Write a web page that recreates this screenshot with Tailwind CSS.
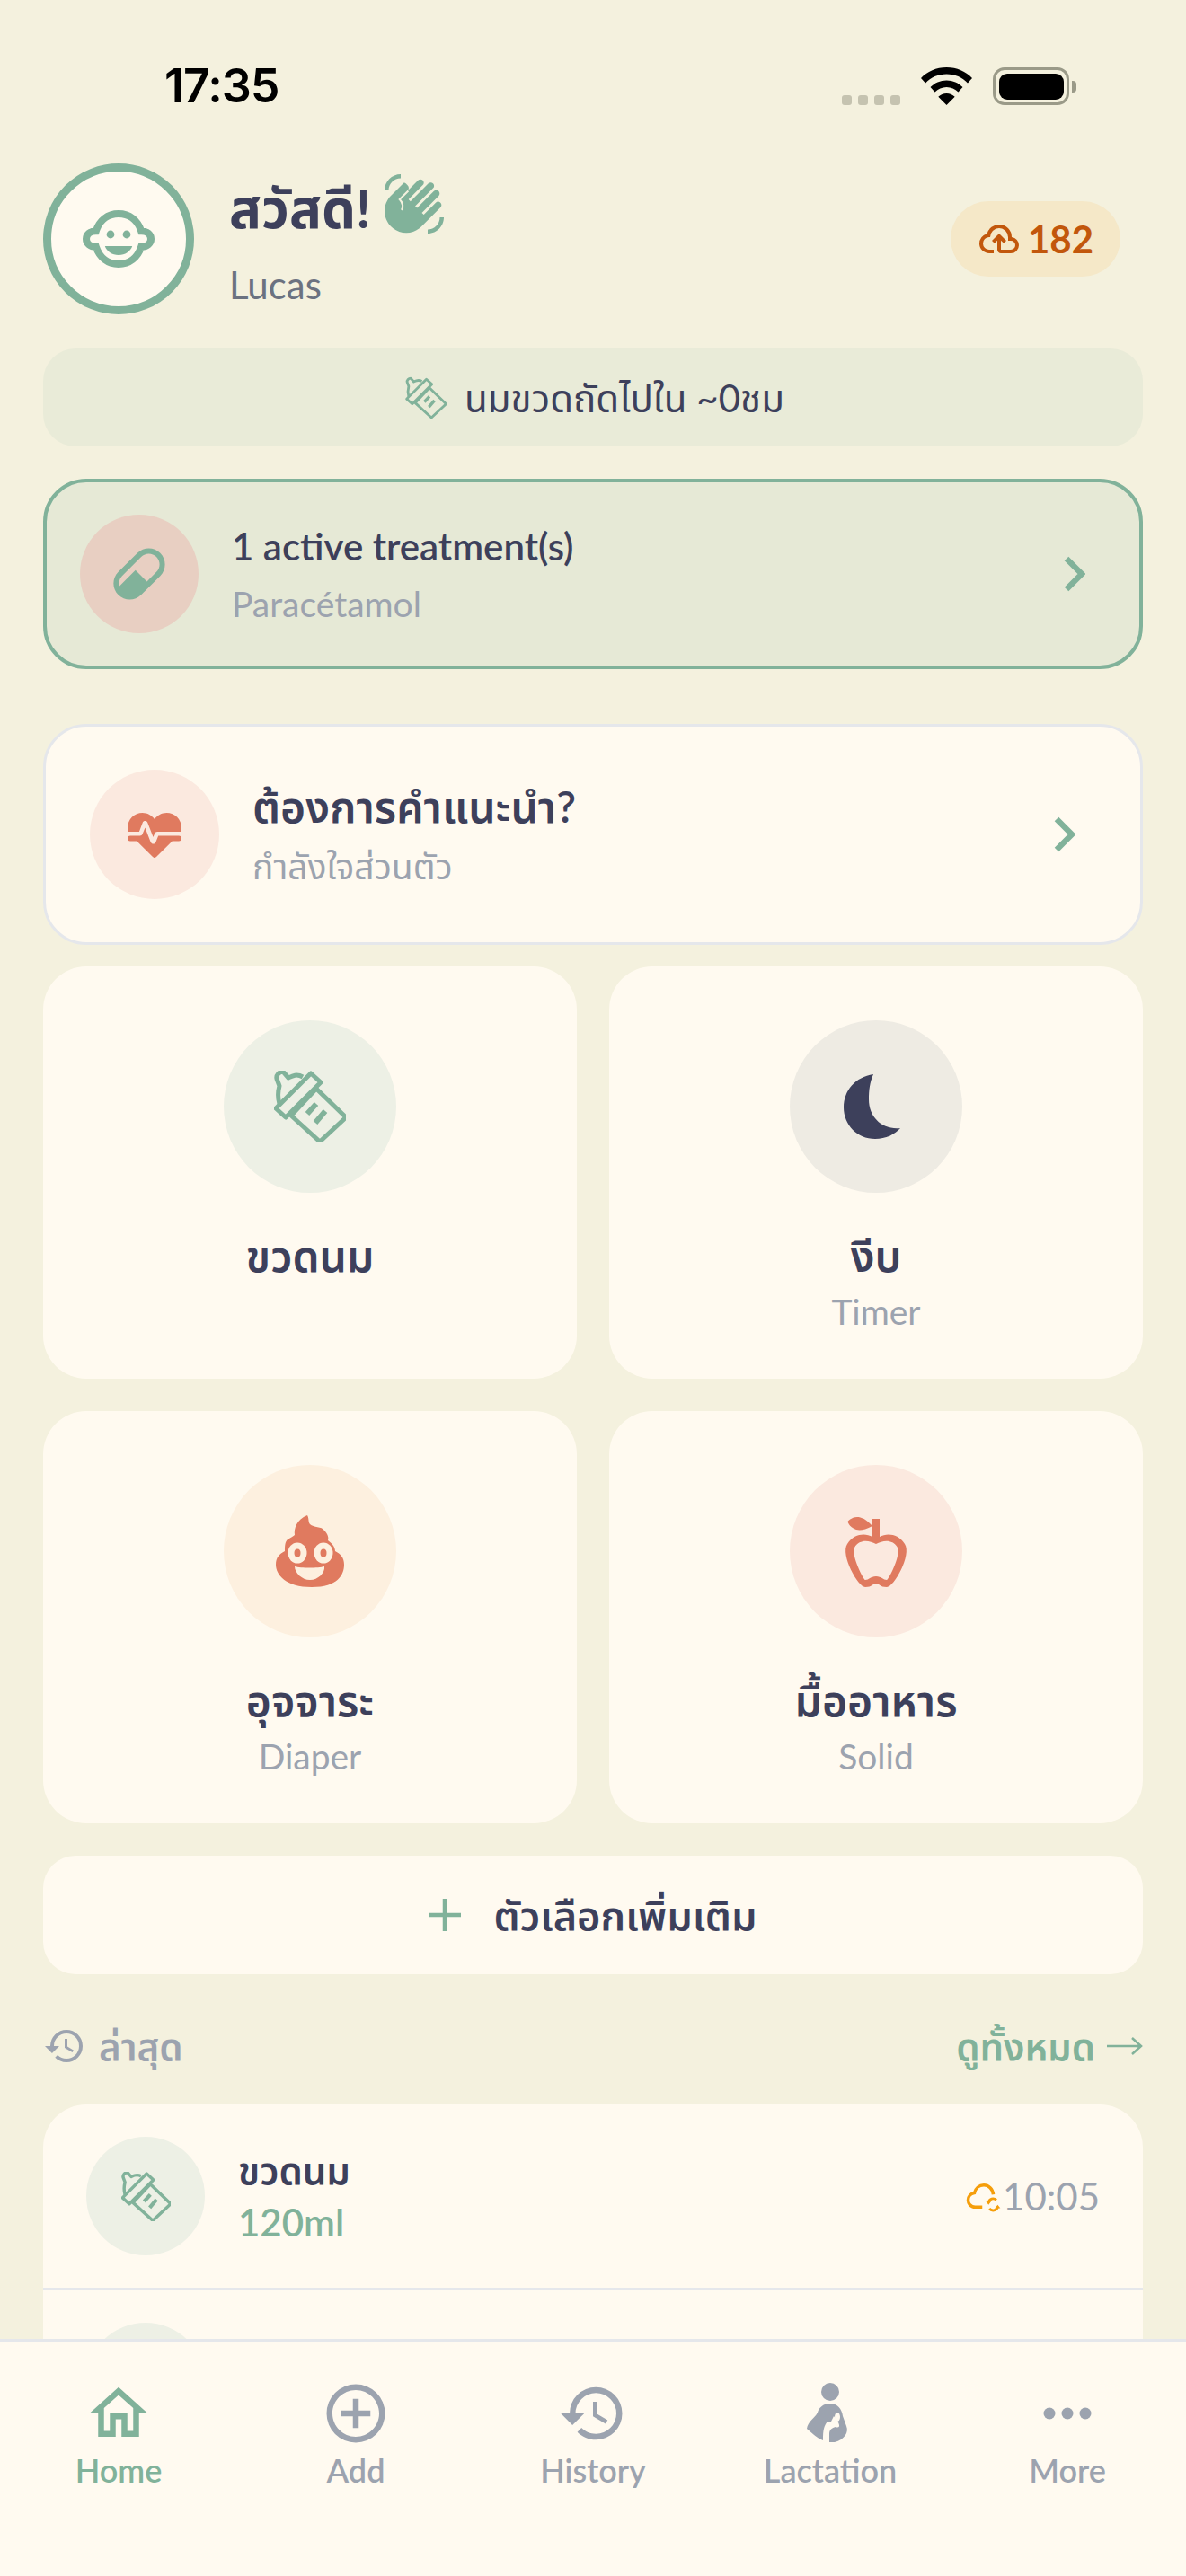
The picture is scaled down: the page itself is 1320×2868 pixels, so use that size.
<!DOCTYPE html>
<html lang="th">
<head>
<meta charset="utf-8">
<script src="https://cdn.jsdelivr.net/npm/@tailwindcss/browser@4"></script>
<title>Home</title>
</head>
<body class="m-0">
<div class="relative w-[1320px] h-[2868px] overflow-hidden bg-[#f4f1de] text-[#3d405b] font-['Lato','Noto_Sans_Thai','Noto_Sans',sans-serif]">

  <!-- status bar -->
  <div class="flex items-center justify-between h-[42px] mt-[75px] pl-[183px] pr-[122px]">
    <span class="font-['Inter',sans-serif] font-semibold text-[52px] leading-[42px] text-black tracking-[-1px]">17:35</span>
    <div class="flex items-end">
      <div class="flex gap-[7px] mr-[23px]">
        <span class="w-[11px] h-[11px] rounded-[3px] bg-[#c5c3b0]"></span>
        <span class="w-[11px] h-[11px] rounded-[3px] bg-[#c5c3b0]"></span>
        <span class="w-[11px] h-[11px] rounded-[3px] bg-[#c5c3b0]"></span>
        <span class="w-[11px] h-[11px] rounded-[3px] bg-[#c5c3b0]"></span>
      </div>
      <svg class="w-[57px] h-[42px] mr-[23px]" viewBox="0 0 57 42"><path fill="#000" d="M28.5 0C40 0 50 4.5 57 12l-5 5.5C46 11 37.8 7.5 28.500 7.500S11 11 5 17.500L0 12C7 4.500 17 0 28.500 0ZM28.500 14.500c7 0 13.400 2.800 18 7.600l-5 5.400c-3.400-3.500-8-5.600-13-5.600s-9.600 2.100-13 5.600l-5-5.400c4.600-4.800 11-7.600 18-7.600ZM28.500 29c3.500 0 6.800 1.400 9.200 3.800L28.500 42l-9.200-9.200c2.400-2.400 5.700-3.800 9.200-3.800Z"/></svg>
      <div class="flex items-center">
        <div class="w-[85px] h-[42px] rounded-[13px] border-[3.500px] border-[#9a9a88] p-[3.500px]">
          <div class="w-full h-full rounded-[9px] bg-black"></div>
        </div>
        <span class="w-[5px] h-[13px] ml-[3px] rounded-r-[4px] bg-[#9a9a88]"></span>
      </div>
    </div>
  </div>

  <main class="px-[48px] pt-[65px]">
    <!-- header -->
    <header class="flex items-center justify-between h-[168px] pr-[25px]">
      <div class="flex items-center gap-[39px]">
        <div class="flex items-center justify-center w-[168px] h-[168px] rounded-full border-[9px] border-[#81b29a] bg-[#fffaf0]">
          <svg class="w-[96px] h-[96px]" viewBox="0 0 24 24"><path fill="none" stroke="#81b29a" stroke-width="2" d="M12 5C15 5 17.300 6.800 18.300 9.800C20 9.800 21 10.800 21 12C21 13.200 20 14.200 18.300 14.200C17.300 17.200 15 19 12 19C9 19 6.700 17.200 5.700 14.200C4 14.200 3 13.200 3 12C3 10.800 4 9.800 5.700 9.800C6.700 6.800 9 5 12 5Z"/><circle cx="9.750" cy="10.750" r="1.100" fill="#81b29a"/><circle cx="14.250" cy="10.750" r="1.100" fill="#81b29a"/><path fill="#81b29a" d="M8.200 14H15.800C15.300 15.500 13.800 16.500 12 16.500S8.700 15.500 8.200 14Z"/></svg>
        </div>
        <div class="flex flex-col">
          <div class="flex items-center h-[100px] mt-[-6px]">
            <span class="text-[60px] leading-[100px] font-bold">สวัสดี!</span>
            <svg class="w-[72px] h-[72px] ml-[12px] mt-[-8px]" viewBox="0 0 24 24"><path fill="#81b29a" d="M23 17C23 20.310 20.310 23 17 23V21.500C19.500 21.500 21.500 19.500 21.500 17H23M1 7C1 3.690 3.690 1 7 1V2.500C4.500 2.500 2.500 4.500 2.500 7H1M8 4.320L3.420 8.900C.24 12.080 .24 17.220 3.420 20.400S11.500 23.580 14.680 20.400L21.750 13.320C22.240 12.830 22.240 12.040 21.750 11.550C21.260 11.060 20.470 11.060 20 11.550L15.540 16L14.830 15.300L21.070 9.060C21.560 8.570 21.560 7.780 21.070 7.290S19.800 6.800 19.310 7.290L13.070 13.530L12.360 12.820L19 6.190C19.500 5.700 19.500 4.910 19 4.420S17.730 3.930 17.240 4.420L10.610 11.050L9.900 10.340L15.200 5.040C15.690 4.550 15.690 3.760 15.200 3.270S13.930 2.780 13.440 3.270L8.800 7.900L9.600 7C10.100 6.500 10.100 5.700 9.600 5.200S8.500 3.800 8 4.320Z"/><path fill="none" stroke="#f4f1de" stroke-width="0.700" d="M9.800 7.200L6.600 10.300C7.900 11.600 8 13.400 7.300 14.300"/></svg>
          </div>
          <span class="text-[42px] leading-[56px] text-[#6b7280] mt-[8px]">Lucas</span>
        </div>
      </div>
      <div class="flex items-center justify-center gap-[8px] w-[189px] h-[84px] rounded-[42px] bg-[#f5e8c8] text-[#c2570c]">
        <svg class="w-[48px] h-[48px]" viewBox="0 0 24 24"><path fill="#c2570c" d="M6.500 20Q4.220 20 2.610 18.430 1 16.850 1 14.580 1 12.630 2.170 11.100 3.350 9.570 5.250 9.150 5.880 6.850 7.750 5.430 9.630 4 12 4 14.930 4 16.960 6.040 19 8.070 19 11 20.730 11.200 21.860 12.500 23 13.780 23 15.500 23 17.380 21.690 18.690 20.380 20 18.500 20H13Q12.180 20 11.590 19.410 11 18.830 11 18V12.850L9.400 14.400L8 13L12 9L16 13L14.600 14.400L13 12.850V18H18.500Q19.550 18 20.270 17.270 21 16.550 21 15.500 21 14.450 20.270 13.730 19.550 13 18.500 13H17V11Q17 8.930 15.540 7.460 14.080 6 12 6 9.930 6 8.460 7.460 7 8.930 7 11H6.500Q5.050 11 4.030 12.030 3 13.050 3 14.500 3 15.950 4.030 17 5.050 18 6.500 18H9V20Z"/></svg>
        <span class="text-[42px] font-bold leading-none">182</span>
      </div>
    </header>

    <!-- next feed banner -->
    <div class="flex items-center justify-center gap-[16px] h-[109px] mt-[38px] rounded-[36px] bg-[#e9ebd8]">
      <svg class="w-[54px] h-[54px]" viewBox="-8 -8 96 96"><g fill="none" stroke="#81b29a" stroke-width="5" stroke-linejoin="round"><path d="M47 20L80 52L51 79L19 50Z"/><path d="M41 3L52 13L13 52L2 42Z"/><path d="M32 7C25 3 20 6 16 8L10 1C6 1 2 5 3 9L6 17C4 24 4 30 6 37"/></g><path stroke="#81b29a" stroke-width="6" d="M47 37L37 48M57 45L46 58"/></svg>
      <span class="text-[42px] leading-none">นมขวดถัดไปใน ~0ชม</span>
    </div>

    <!-- treatment -->
    <div class="flex items-center h-[212px] mt-[36px] pl-[37px] pr-[60px] rounded-[48px] border-[4.500px] border-[#81b29a] bg-[#e6e9d6]">
      <div class="flex items-center justify-center w-[132px] h-[132px] rounded-full bg-[#e8cfc2] shrink-0">
        <svg class="w-[72px] h-[72px]" viewBox="0 0 24 24"><path fill="#81b29a" d="M4.220 11.290L11.290 4.220C13.640 1.880 17.430 1.880 19.780 4.220C22.120 6.570 22.120 10.360 19.780 12.710L12.710 19.780C10.360 22.120 6.570 22.120 4.220 19.780C1.880 17.430 1.880 13.640 4.220 11.290M5.640 12.710C4.590 13.750 4.240 15.240 4.600 16.570L10.590 10.590L14.830 14.830L18.360 11.290C19.930 9.730 19.930 7.200 18.360 5.640C16.800 4.070 14.270 4.070 12.710 5.640L5.640 12.710Z"/></svg>
      </div>
      <div class="flex flex-col ml-[37px] flex-1">
        <span class="text-[42px] leading-[56px] font-semibold">1 active treatment(s)</span>
        <span class="text-[39px] leading-[52px] mt-[10px] text-[#9ca3af]">Paracétamol</span>
      </div>
      <svg class="w-[24px] h-[40px]" viewBox="0 0 24 40"><path d="M3 3L20 20L3 37" fill="none" stroke="#81b29a" stroke-width="6.500"/></svg>
    </div>

    <!-- help -->
    <div class="flex items-center h-[246px] mt-[61px] pl-[49px] pr-[72px] rounded-[48px] border-[3px] border-[#e5e7eb] bg-[#fffaf0]">
      <div class="flex items-center justify-center w-[144px] h-[144px] rounded-full bg-[#fbe9df] shrink-0">
        <svg class="w-[72px] h-[72px]" viewBox="0 0 24 24"><path fill="#e07a5f" d="M7.500 4A5.500 5.500 0 0 0 2 9.500C2 10 2.090 10.500 2.220 11H6.300L7.570 7.630C7.870 6.830 9.050 6.750 9.430 7.630L11.500 13L12.090 11.580C12.220 11.250 12.570 11 13 11H21.780C21.910 10.500 22 10 22 9.500A5.500 5.500 0 0 0 16.500 4C14.640 4 13 4.930 12 6.340C11 4.930 9.360 4 7.500 4M3 12.500A1 1 0 0 0 2 13.500A1 1 0 0 0 3 14.500H5.440L11 20C12 20.900 12 20.900 13 20L18.560 14.500H21A1 1 0 0 0 22 13.500A1 1 0 0 0 21 12.500H13.400L12.470 14.800C12.070 15.810 10.920 15.670 10.550 14.830L8.500 9.500L7.540 11.830C7.390 12.210 7.050 12.500 6.600 12.500H3Z"/></svg>
      </div>
      <div class="flex flex-col ml-[37px] flex-1">
        <span class="text-[48px] leading-[60px] font-semibold">ต้องการคำแนะนำ?</span>
        <span class="text-[39px] leading-[52px] mt-[10px] text-[#9ca3af]">กำลังใจส่วนตัว</span>
      </div>
      <svg class="w-[24px] h-[40px]" viewBox="0 0 24 40"><path d="M3 3L20 20L3 37" fill="none" stroke="#81b29a" stroke-width="6.500"/></svg>
    </div>

    <!-- grid -->
    <div class="grid grid-cols-2 gap-[36px] mt-[24px]">
      <div class="flex flex-col items-center h-[459px] pt-[60px] rounded-[48px] bg-[#fffaf0]">
        <div class="flex items-center justify-center w-[192px] h-[192px] rounded-full bg-[#edf0e5]">
          <svg class="w-[80px] h-[80px]" viewBox="0 0 80 80"><g fill="none" stroke="#81b29a" stroke-width="5" stroke-linejoin="round"><path d="M47 20L80 52L51 79L19 50Z"/><path d="M41 3L52 13L13 52L2 42Z"/><path d="M32 7C25 3 20 6 16 8L10 1C6 1 2 5 3 9L6 17C4 24 4 30 6 37"/></g><path stroke="#81b29a" stroke-width="6" d="M47 37L37 48M57 45L46 58"/></svg>
        </div>
        <span class="text-[48px] leading-[60px] font-semibold mt-[40px]">ขวดนม</span>
      </div>
      <div class="flex flex-col items-center h-[459px] pt-[60px] rounded-[48px] bg-[#fffaf0]">
        <div class="flex items-center justify-center w-[192px] h-[192px] rounded-full bg-[#eeebe3]">
          <svg class="w-[96px] h-[96px]" viewBox="0 0 96 96"><path fill="#3d405b" transform="translate(12 12)" d="M33 0C13 3 0 18 0 37C0 56 15 72 35 72C47 72 57 67 63 60C43 62 28 48 28 28C28 18 29 9 33 0Z"/></svg>
        </div>
        <span class="text-[48px] leading-[60px] font-semibold mt-[40px]">งีบ</span>
        <span class="text-[39px] leading-[52px] mt-[6px] text-[#9ca3af]">Timer</span>
      </div>
      <div class="flex flex-col items-center h-[459px] pt-[60px] rounded-[48px] bg-[#fffaf0]">
        <div class="flex items-center justify-center w-[192px] h-[192px] rounded-full bg-[#fdf0df]">
          <svg class="w-[78px] h-[80px]" viewBox="0 0 78 80"><path fill="#e07a5f" d="M36 0C38 3 37 8 39 10C43 14 52 12 55 17C59 21 60 25 59 28C63 31 67 35 67 40C73 43 77 47 77 55C77 66 70 80 41 80C12 80 1 66 1 55C1 47 5 43 11 40C11 35 11 30 14 27C17 25 20 24 22 22C21 15 24 5 36 0Z"/><ellipse cx="25" cy="42" rx="10.500" ry="11.500" fill="#fdf0df"/><ellipse cx="54" cy="42" rx="10.500" ry="11.500" fill="#fdf0df"/><ellipse cx="25" cy="42" rx="3.500" ry="4.500" fill="#e07a5f"/><ellipse cx="54" cy="42" rx="3.500" ry="4.500" fill="#e07a5f"/><path fill="#fdf0df" d="M22 57C29 59 48 59 55 57C56 64 48 72 39 72C30 72 22 64 22 57Z"/></svg>
        </div>
        <span class="text-[48px] leading-[60px] font-semibold mt-[40px]">อุจจาระ</span>
        <span class="text-[39px] leading-[52px] mt-[6px] text-[#9ca3af]">Diaper</span>
      </div>
      <div class="flex flex-col items-center h-[459px] pt-[60px] rounded-[48px] bg-[#fffaf0]">
        <div class="flex items-center justify-center w-[192px] h-[192px] rounded-full bg-[#fbe9df]">
          <svg class="w-[96px] h-[96px]" viewBox="0 0 24 24"><path fill="#e07a5f" fill-rule="evenodd" d="M20 10C22 13 17 22 15 22C13 22 13 21 12 21C11 21 11 22 9 22C7 22 2 13 4 10C6 7 9 7 11 8V5C5.380 8.070 4.110 3.780 4.110 3.780C4.110 3.780 6.770 .19 11 5V3H13V8C15 7 18 7 20 10ZM12 10C14 9 16.500 8.600 18 11C19 13 15.500 20 15 20C14 20 13.500 19 12 19C10.500 19 10 20 9 20C8.500 20 5 13 6 11C7.500 8.600 10 9 12 10Z"/></svg>
        </div>
        <span class="text-[48px] leading-[60px] font-semibold mt-[40px]">มื้ออาหาร</span>
        <span class="text-[39px] leading-[52px] mt-[6px] text-[#9ca3af]">Solid</span>
      </div>
    </div>

    <!-- more options -->
    <div class="flex items-center justify-center gap-[36px] h-[132px] mt-[36px] rounded-[36px] bg-[#fffaf0]">
      <svg class="w-[36px] h-[36px]" viewBox="0 0 36 36"><path d="M18 0V36M0 18H36" stroke="#81b29a" stroke-width="4.500"/></svg>
      <span class="text-[45px] leading-none font-semibold">ตัวเลือกเพิ่มเติม</span>
    </div>

    <!-- recent header -->
    <div class="flex items-center justify-between h-[64px] mt-[48px]">
      <div class="flex items-center gap-[14px]">
        <svg class="w-[48px] h-[48px]" viewBox="0 0 24 24"><path fill="#9ca3af" d="M13.500 8H12V13L16.280 15.540L17 14.330L13.500 12.250V8M13 3A9 9 0 0 0 4 12H1L4.960 16.030L9 12H6A7 7 0 0 1 13 5A7 7 0 0 1 20 12A7 7 0 0 1 13 19C11.070 19 9.320 18.210 8.060 16.940L6.640 18.360C8.270 20 10.500 21 13 21A9 9 0 0 0 22 12A9 9 0 0 0 13 3Z"/></svg>
        <span class="text-[42px] leading-none font-semibold text-[#9ca3af]">ล่าสุด</span>
      </div>
      <div class="flex items-center gap-[13px]">
        <span class="text-[42px] leading-none font-semibold text-[#81b29a]">ดูทั้งหมด</span>
        <svg class="w-[40px] h-[24px]" viewBox="0 0 40 24"><path d="M0 12H38M28 3L38 12L28 21" fill="none" stroke="#81b29a" stroke-width="2.500"/></svg>
      </div>
    </div>

    <!-- recent list -->
    <div class="mt-[33px] rounded-t-[48px] bg-[#fffaf0]">
      <div class="flex items-center h-[204px] pl-[48px] pr-[48px]">
        <div class="flex items-center justify-center w-[132px] h-[132px] rounded-full bg-[#edf0e5] shrink-0">
          <svg class="w-[55px] h-[55px]" viewBox="0 0 80 80"><g fill="none" stroke="#81b29a" stroke-width="5" stroke-linejoin="round"><path d="M47 20L80 52L51 79L19 50Z"/><path d="M41 3L52 13L13 52L2 42Z"/><path d="M32 7C25 3 20 6 16 8L10 1C6 1 2 5 3 9L6 17C4 24 4 30 6 37"/></g><path stroke="#81b29a" stroke-width="6" d="M47 37L37 48M57 45L46 58"/></svg>
        </div>
        <div class="flex flex-col ml-[37px] flex-1">
          <span class="text-[42px] leading-[56px] font-semibold">ขวดนม</span>
          <span class="text-[42px] leading-[56px] mt-[2px] font-semibold text-[#81b29a]">120ml</span>
        </div>
        <div class="flex items-center">
          <svg class="w-[42px] h-[42px]" viewBox="0 0 24 24"><path fill="none" stroke="#f59e0b" stroke-width="2" d="M11 19H6.500C3.500 19 2 16.700 2 14.500C2 12.200 3.700 10.300 6 10C6.700 7.100 9 5 12 5C15 5 17.700 7.500 18 11"/><path fill="none" stroke="#f59e0b" stroke-width="1.600" d="M20 14.500C18.300 13 15.500 13.500 15 16M15.500 20C17 21.800 20 21.400 20.800 19"/><path fill="#f59e0b" d="M13.300 15.300L16.700 15.300L15 17.500ZM19 19.700L22.500 19.700L20.800 17.500Z"/></svg>
          <span class="text-[42px] leading-none text-[#9ca3af]">10:05</span>
        </div>
      </div>
      <div class="h-[3px] bg-[#e5e7eb]"></div>
      <div class="h-[204px] pt-[36px] pl-[48px]">
        <div class="w-[132px] h-[132px] rounded-full bg-[#edf0e5]"></div>
      </div>
    </div>
  </main>

  <!-- tab bar -->
  <nav class="absolute left-0 right-0 bottom-0 h-[264px] grid grid-cols-5 pt-[41px] border-t-[3px] border-[#e5e7eb] bg-[#fffaf0]">
    <div class="flex flex-col items-center">
      <svg class="w-[78px] h-[78px]" viewBox="0 0 24 24"><path fill="#81b29a" d="M12 5.690L17 10.190V18H15V12H9V18H7V10.190L12 5.690M12 3L2 12H5V20H11V14H13V20H19V12H22L12 3Z"/></svg>
      <span class="text-[36px] leading-[48px] mt-[0px] font-semibold text-[#81b29a]">Home</span>
    </div>
    <div class="flex flex-col items-center">
      <svg class="w-[78px] h-[78px]" viewBox="0 0 24 24"><path fill="#9ca3af" d="M12 20C7.590 20 4 16.410 4 12C4 7.590 7.590 4 12 4C16.410 4 20 7.590 20 12C20 16.410 16.410 20 12 20M12 2A10 10 0 0 0 2 12A10 10 0 0 0 12 22A10 10 0 0 0 22 12A10 10 0 0 0 12 2M13 7H11V11H7V13H11V17H13V13H17V11H13V7Z"/></svg>
      <span class="text-[36px] leading-[48px] font-semibold text-[#9ca3af]">Add</span>
    </div>
    <div class="flex flex-col items-center">
      <svg class="w-[78px] h-[78px]" viewBox="0 0 24 24"><path fill="#9ca3af" d="M13.500 8H12V13L16.280 15.540L17 14.330L13.500 12.250V8M13 3A9 9 0 0 0 4 12H1L4.960 16.030L9 12H6A7 7 0 0 1 13 5A7 7 0 0 1 20 12A7 7 0 0 1 13 19C11.070 19 9.320 18.210 8.060 16.940L6.640 18.360C8.270 20 10.500 21 13 21A9 9 0 0 0 22 12A9 9 0 0 0 13 3Z"/></svg>
      <span class="text-[36px] leading-[48px] font-semibold text-[#9ca3af]">History</span>
    </div>
    <div class="flex flex-col items-center">
      <svg class="w-[78px] h-[78px]" viewBox="0 0 78 78"><circle cx="39" cy="15" r="10" fill="#9ca3af"/><path fill="#9ca3af" fill-rule="evenodd" d="M39 28C47 28 52 34 53 42L57 53C60 60 55 68 44 71H38V62C38 57 41 55 45 54C50 56 50 52 47 47L43 42L40 48L36 48C32 53 31 57 31 69C25 67 20 62 13 56C14 48 22 44 25 38C26 33 31 28 39 28Z"/><ellipse cx="47" cy="43" rx="3" ry="5" fill="#fffaf0"/></svg>
      <span class="text-[36px] leading-[48px] font-semibold text-[#9ca3af]">Lactation</span>
    </div>
    <div class="flex flex-col items-center">
      <svg class="w-[78px] h-[78px]" viewBox="0 0 78 78"><circle cx="19" cy="39" r="6.500" fill="#9ca3af"/><circle cx="39" cy="39" r="6.500" fill="#9ca3af"/><circle cx="59" cy="39" r="6.500" fill="#9ca3af"/></svg>
      <span class="text-[36px] leading-[48px] font-semibold text-[#9ca3af]">More</span>
    </div>
  </nav>
</div>
</body>
</html>
